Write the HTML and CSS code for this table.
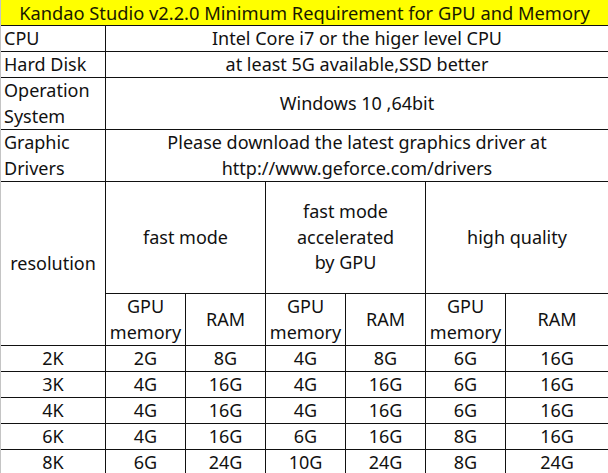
FILE: index.html
```html
<!DOCTYPE html>
<html>
<head>
<meta charset="utf-8">
<link rel="stylesheet" href="styles.css">
</head>
<body>
<div class="sheet">
  <div class="cell title"><span>Kandao Studio v2.2.0 Minimum Requirement for GPU and Memory</span></div>

  <div class="cell label"><span>CPU</span></div>
  <div class="cell value"><span>Intel Core i7 or the higer level CPU</span></div>

  <div class="cell label"><span>Hard Disk</span></div>
  <div class="cell value"><span>at least 5G available,SSD better</span></div>

  <div class="cell label"><span>Operation<br>System</span></div>
  <div class="cell value"><span>Windows 10 ,64bit</span></div>

  <div class="cell label"><span>Graphic<br>Drivers</span></div>
  <div class="cell value"><span>Please download the latest graphics driver at<br>http://www.geforce.com/drivers</span></div>

  <div class="cell res"><span>resolution</span></div>
  <div class="cell mode"><span>fast mode</span></div>
  <div class="cell mode"><span>fast mode<br>accelerated<br>by GPU</span></div>
  <div class="cell mode"><span>high quality</span></div>

  <div class="cell sub"><span>GPU<br>memory</span></div>
  <div class="cell sub"><span>RAM</span></div>
  <div class="cell sub"><span>GPU<br>memory</span></div>
  <div class="cell sub"><span>RAM</span></div>
  <div class="cell sub"><span>GPU<br>memory</span></div>
  <div class="cell sub"><span>RAM</span></div>

  <div class="cell">2K</div><div class="cell">2G</div><div class="cell">8G</div><div class="cell">4G</div><div class="cell">8G</div><div class="cell">6G</div><div class="cell">16G</div>
  <div class="cell">3K</div><div class="cell">4G</div><div class="cell">16G</div><div class="cell">4G</div><div class="cell">16G</div><div class="cell">6G</div><div class="cell">16G</div>
  <div class="cell">4K</div><div class="cell">4G</div><div class="cell">16G</div><div class="cell">4G</div><div class="cell">16G</div><div class="cell">6G</div><div class="cell">16G</div>
  <div class="cell">6K</div><div class="cell">4G</div><div class="cell">16G</div><div class="cell">6G</div><div class="cell">16G</div><div class="cell">8G</div><div class="cell">16G</div>
  <div class="cell">8K</div><div class="cell">6G</div><div class="cell">24G</div><div class="cell">10G</div><div class="cell">24G</div><div class="cell">8G</div><div class="cell">24G</div>
</div>
</body>
</html>
```

FILE: styles.css
```css
html, body {
  margin: 0;
  padding: 0;
  background: #ffffff;
}

.sheet {
  display: grid;
  grid-template-columns: 104px 79px 79px 79px 79px 79px 102px;
  grid-template-rows: 25px 25px 25px 51px 51px 111px 51px 25px 25px 25px 25px 25px;
  gap: 1px;
  background: #111111;
  border-left: 1px solid #c4c4c4;
  width: 607px;
  font-family: "Noto Sans", "Open Sans", sans-serif;
  font-size: 18px;
  line-height: 25.5px;
  color: #111111;
}

.cell {
  background: #ffffff;
  display: flex;
  align-items: center;
  justify-content: center;
  text-align: center;
  overflow: hidden;
  white-space: nowrap;
}

.title {
  grid-column: 1 / -1;
  background: #ffff00;
  color: #1a1a00;
  font-size: 18.3px;
}

.label {
  justify-content: flex-start;
  align-items: flex-start;
  text-align: left;
  padding-left: 3px;
}

.value {
  grid-column: 2 / -1;
}

.res {
  grid-row: span 2;
}

.mode {
  grid-column: span 2;
}
```
